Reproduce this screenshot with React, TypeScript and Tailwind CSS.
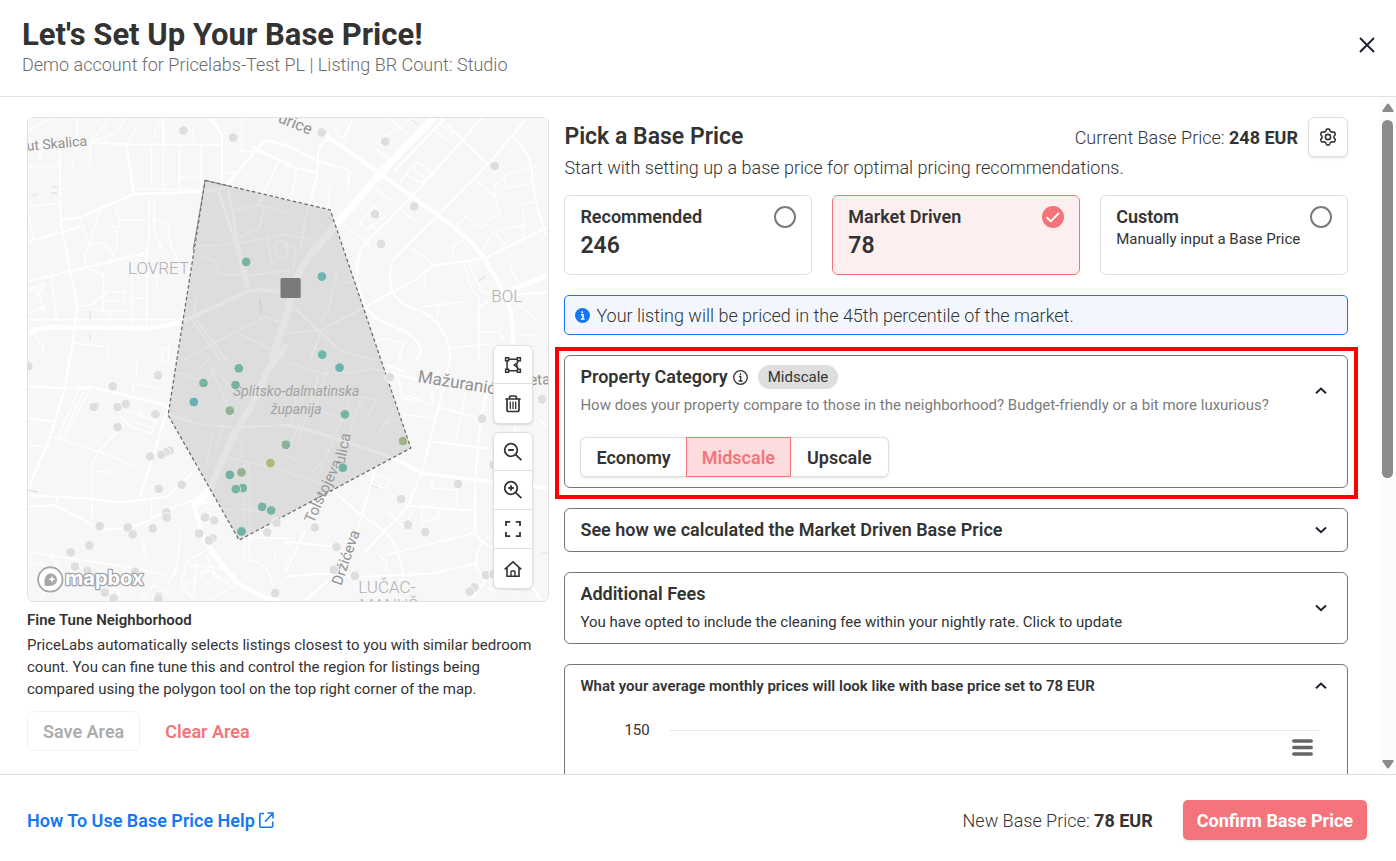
import React from "react";

type Dot = [number, number, string?];

const TEAL = "#78b3a4";
const LIGHT = "#dedede";

const tiles: { x: number; y: number; dots: Dot[]; roads: [number, string][] }[] = [
  {
    x: 20,
    y: 110,
    dots: [[490, 62], [639, 83], [678, 456, TEAL]],
    roads: [
      [6, "M210 97 L320 103 L605 105 M430 20 V105 M320 103 L340 253 M118 100 L122 340 M20 515 L385 428 M122 340 L150 480 L172 590 L150 750 M20 395 L122 368 L180 350 M478 105 V240 M542 105 V240 M605 75 V215"],
      [8, "M125 332 L180 322 L340 253 L560 245 L610 235 L735 90 L810 110 M690 110 L810 165 M570 25 L605 72"],
      [13, "M0 690 Q40 655 80 652 L380 654 Q450 652 520 620 L680 545 Q720 535 810 550"],
      [4, "M210 97 L270 25 M210 97 V170 M172 20 V90 M210 97 L290 70 L320 20 M320 103 L350 50 M395 105 V225 M430 105 V240 M480 203 H540 M340 237 L605 240 M388 260 V410 M402 260 V360 L425 415 M402 330 L445 340 L450 400 L475 455 M240 300 L195 435 V470 L250 495 M180 325 L190 360 L205 380 M210 402 L250 400 L280 430 L270 470 M300 330 H380 M300 330 L285 290 M290 355 V420 M270 350 H300 V330 M20 170 H115 M20 290 L115 280 M25 310 L40 390 M60 100 V165 M160 140 V170 M95 500 L110 635 M50 535 L75 610 M20 540 L75 520 L50 560 M20 610 L75 590 M250 490 V600 M258 545 H313 V573 H258 Z M335 450 V650 M335 565 H382 M380 400 V645 M172 590 L215 585 L260 545 M215 602 H330 M270 600 V645 M20 630 L500 628 M160 700 L265 710 V745 M40 670 L70 710 V725 M425 750 V715 H445 V750 M410 490 V530 M510 410 L620 405 L740 385 L810 370 M665 25 V125 H730 M520 45 V100 M405 85 V60 L430 30 M25 60 L90 25 M120 230 L140 245 M610 188 H650"],
      [8, "M595 245 L640 380 L680 535 M625 240 L650 380 L685 530"],
      [5, "M625 305 L715 285 L775 155 M715 285 L810 310 M730 290 L718 355 L650 385 M740 375 L755 465 M765 400 Q785 380 800 410 V430 Q785 460 765 430 Z M665 500 L810 480 M540 440 L580 450 L600 495 H660 M510 620 L600 750 M525 625 L620 750 M735 620 L600 690 L490 750 M655 670 L780 730 M735 620 L810 650 M805 600 L750 750 M530 550 L520 620"],
    ],
  },
  {
    x: 285,
    y: 110,
    dots: [[109, 68], [300, 95], [628, 169], [387, 290], [269, 313], [287, 402], [110, 500, "#6fb5af"], [111, 734, "#6fb5af"]],
    roads: [
      [12, "M120 75 L290 195 L470 325 Q560 390 600 450 L650 540 Q690 600 684 750"],
      [22, "M450 20 L290 185 L165 330 L80 430 Q30 490 15 580 L-40 750"],
      [6, "M325 185 L475 30 M590 25 L385 255 L240 400 Q190 470 240 590 L270 625 Q330 650 370 670 Q430 720 390 750 M720 30 L620 150 L320 455 Q300 540 350 580 L420 610 Q490 650 496 750 M460 20 L610 165 M685 85 Q740 130 740 200 L752 280 L780 370 L800 380 M0 105 L100 155 M0 165 L95 190 M130 90 Q95 100 98 150 L97 190 L60 330 L45 420 M100 155 L190 180 L190 230 M0 670 L110 660 L240 590 L390 510 L445 467 L600 445 L720 385 L800 345"],
      [15, "M660 550 L690 535 L810 485"],
      [6, "M690 555 L800 545 M580 750 V600 Q585 580 650 560 M25 590 L130 690 L170 725 L270 750 M110 660 L75 750"],
      [4, "M270 100 L385 20 M270 115 L310 150 M310 25 L370 75 M145 50 L170 90 L200 30 L175 110 M445 60 L485 90 L500 70 L460 40 M400 155 L440 190 L405 220 L360 190 Z M380 175 L420 205 M345 215 L370 185 M270 235 L320 275 M225 340 L265 290 L300 320 L245 358 Z M260 350 L285 370 M350 300 L390 335 M180 345 L255 410 M380 415 L445 465 M420 490 V540 M575 215 L630 260 L645 315 L615 325 L595 355 L570 345 L545 320 L510 350 M630 260 L625 230 L670 190 L755 170 M655 205 L665 235 L742 220 M710 285 L750 275 M710 285 L720 345 L625 365 L590 420 M630 370 L660 405 M715 345 V380 M530 390 L500 410 L505 450 M535 460 L560 540 L580 560 V600 M545 455 L595 550 L640 540 M675 470 L700 520 M695 580 L755 630 L745 640 M410 590 L540 575 M460 590 L455 620 M580 665 L640 665 L655 690 M500 715 L580 705 L620 700 M700 675 H750 M710 715 H760 M270 695 L300 685 L355 700 L340 750 M35 175 L20 255 M135 215 L128 290 M0 375 L90 390 M0 400 L30 420 L25 480 M155 485 L130 600 L105 640 M165 520 L205 515"],
    ],
  },
  {
    x: 20,
    y: 355,
    dots: [
      [25, 34], [414, 61], [278, 94], [317, 147], [292, 156], [225, 153], [221, 156], [406, 178], [292, 216], [390, 304], [449, 287], [437, 292], [424, 299],
      [485, 389], [416, 401], [439, 472], [440, 487], [555, 487], [582, 496], [537, 535], [577, 549], [567, 556], [239, 513], [323, 517], [338, 538],
      [398, 520], [208, 571], [152, 592], [165, 634], [202, 647], [345, 650], [254, 712], [281, 729], [415, 725], [415, 732], [769, 503], [741, 532], [765, 714],
      [656, 40, TEAL], [550, 84, TEAL], [646, 90, TEAL], [521, 141, "#66b1b0"], [629, 167, "#90b48d"], [797, 269, "#85b398"], [751, 324, "#b4b67e"],
      [629, 359, "#74b3a4"], [664, 352, "#94b491"], [668, 399, TEAL], [647, 402, TEAL], [726, 455, TEAL], [753, 466, TEAL], [664, 529, "#70b3a6"],
    ],
    roads: [
      [7, "M20 95 L160 100 Q190 90 230 100 L440 150 L450 180 L530 205 Q620 220 680 215 L810 210 M150 0 L135 100 L90 245 L20 410 M20 190 L105 200"],
      [20, "M800 -30 L740 50 L700 140 L640 240 L570 400 L530 450"],
      [13, "M570 400 L520 440 L535 500 Q545 550 570 580 L650 680 Q700 720 780 740"],
      [6, "M20 420 L215 430 L290 442 L395 430 L440 425 M20 455 L105 450 L240 520 Q300 530 380 500 Q440 460 520 435 L600 450 M440 170 L360 425 M440 425 L485 385 L540 330 M215 430 V490 M105 450 L120 420"],
      [4, "M115 240 L180 100 L210 105 L130 250 Z M135 230 L190 110 M95 245 L235 290 L350 335 M235 290 L320 200 M350 20 V70 M340 85 L430 105 M340 85 V110 M300 180 L335 220 M315 165 L410 200 M330 215 L395 235 L410 190 M345 200 L405 220 M360 160 V190 M215 350 H265 L300 365 M235 290 L215 330 V430 M395 435 V490 M365 545 L380 620 M480 530 L475 600 L465 660 M465 640 L445 690 M20 270 L90 275 M20 590 L350 640 L440 660 M20 620 L120 640 M90 600 L140 680 M500 620 L560 585 L650 690 L540 750 L480 690 Z M510 630 L620 640 M530 615 L520 720 M560 600 L600 690 M495 690 L560 640 L630 690 M545 665 A18 18 0 1 0 581 665 A18 18 0 1 0 545 665 M672 320 V615 M688 320 V615 M672 570 H690 M670 615 H700 L740 640 L760 690 V720 M765 620 V590 M640 545 L810 550 M600 300 L640 310 L810 350 M560 290 L590 270 L610 210 M575 240 L560 330 M640 240 L665 270 V310 M460 50 L560 80 L590 40 M540 40 L570 10 M570 30 L640 190 M600 60 L640 110 M660 460 L720 470 M350 750 L400 690 L450 720 M230 690 L270 680 L300 720 M60 640 L80 700 L60 740 M550 460 L640 465 M790 640 L810 600 M425 0 V20 H445"],
    ],
  },
  {
    x: 285,
    y: 355,
    dots: [
      [314, 67], [590, 191], [770, 133], [625, 329], [518, 387], [347, 432], [368, 509], [420, 531], [89, 517], [154, 576], [146, 644], [209, 662],
      [602, 660], [625, 657], [567, 697], [553, 709], [163, 38, "#6cb2ad"], [179, 178, TEAL], [353, 258, "#a2b487"], [173, 338, "#72b3a4"],
    ],
    roads: [
      [11, "M0 210 Q60 220 120 240 L240 280 Q340 310 410 355 L800 400"],
      [6, "M495 0 L480 80 L455 170 L410 355 L380 420 Q380 450 295 530 L235 595 M150 40 L190 55 L260 40 L400 75 L480 90 L610 110 M605 90 L585 200 L570 370 V535 Q590 565 625 580 M455 155 L585 190 M445 260 L610 280 M370 452 L565 467 M300 600 L570 533 M120 385 L210 465 L295 525 Q340 570 355 665 M60 530 L0 650 M0 560 L150 575 M0 665 L100 655 L240 665 L440 655 L570 625 M270 345 L215 530 L160 650 L60 735 M590 565 Q565 600 575 640 L600 680 L560 730 M690 210 V240 M740 690 L770 740 M700 620 L760 730 M760 190 L800 230 M300 30 L360 50"],
      [4, "M200 120 L100 360 M230 130 L180 270 M100 60 L60 200 M40 80 L20 210 M0 20 L130 60 M120 60 L90 160 L160 190 M200 120 L270 135 L245 190 M280 240 L335 150 M290 210 L360 180 L460 190 M365 120 L440 150 V100 M340 60 L350 130 L410 140 M280 360 L315 375 L305 400 L265 390 M440 370 V400 L515 405 V455 M460 455 V490 L410 500 V455 M300 465 L350 510 M380 470 L370 495 M60 280 L110 320 L80 350 M0 350 L120 390 M0 300 L40 320 M280 600 L305 620 L300 650 M600 130 L630 100 M540 120 L510 260 M210 690 L280 720 M600 700 L700 710 M45 200 L20 260 M60 200 L35 260 M130 30 L110 90 M625 540 L580 560"],
    ],
  },
];

function MapCanvas() {
  return (
    <svg
      viewBox="28 118 520 483"
      preserveAspectRatio="xMidYMid slice"
      className="block h-full w-full"
      role="img"
      aria-label="Neighborhood map"
    >
      <rect x="0" y="0" width="1200" height="900" fill="#f7f7f7" />
      {tiles.map((t) => (
        <g key={`r${t.x}-${t.y}`} transform={`translate(${t.x} ${t.y}) scale(.33333)`} fill="none" stroke="#fff" strokeLinejoin="round">
          {t.roads.map(([w, d]) => (
            <path key={d} d={d} strokeWidth={w} />
          ))}
        </g>
      ))}
      <g stroke="#dddddd" strokeWidth="1">
        <path d="M52 187h6M51 193h6M31 196l7-2M90 311v10M90 334v6M412 120l5 4M478 281l7-4M371 485l7 3M27 490l11 2M541 553h7M260 299l1 15M327 217l5 4" fill="none" />
      </g>
      <g fontFamily="Roboto, 'Noto Sans', sans-serif" fontSize="17" fontWeight="300" fill="#b0b0b0" stroke="#f7f7f7" strokeWidth="2" paintOrder="stroke">
        <text x="128" y="274">LOVRET</text>
        <text x="491" y="302">BOL</text>
        <text x="358" y="593">LUČAC-</text>
        <text x="359" y="611">MANUŠ</text>
      </g>
      <g fontFamily="Roboto, 'Noto Sans', sans-serif" fill="#919191" stroke="#f7f7f7" strokeWidth="2" paintOrder="stroke">
        <text transform="translate(27 151) rotate(-5)" fontSize="14">ut Skalica</text>
        <text transform="translate(277 122) rotate(22)" fontSize="16">urice</text>
        <text transform="translate(417 382) rotate(9)" fontSize="17">Mažuranić</text>
        <text transform="translate(529 385) rotate(-2)" fontSize="15">eta</text>
        <text transform="translate(341 586) rotate(-71)" fontSize="15">Držićeva</text>
      </g>
      <path d="M205 180.500 L330 210 L410.500 448 L239 540 L168 415 Z" fill="#7a7a7a" fillOpacity=".2" stroke="#666" strokeWidth="1.200" strokeDasharray="3.500 2.500" />
      <path d="M193 250 L205 180.500 L228 186" fill="none" stroke="#777" strokeWidth=".8" />
      <g fontFamily="Roboto, 'Noto Sans', sans-serif" fill="#a2a2a2">
        <g fontStyle="italic" textAnchor="middle" fontSize="14">
          <text x="296" y="396">Splitsko-dalmatinska</text>
          <text x="296" y="414">županija</text>
        </g>
        <text transform="translate(313 524) rotate(-65)" fontSize="15" fill="#999">Tolstojeva</text>
        <text transform="translate(344 465) rotate(-78)" fontSize="15" fill="#999">ulica</text>
      </g>
      {tiles.map((t) => (
        <g key={`d${t.x}-${t.y}`} transform={`translate(${t.x} ${t.y}) scale(.33333)`}>
          {t.dots.map(([x, y, c]) => (
            <circle key={`${x}-${y}`} cx={x} cy={y} r="14.500" fill={c ?? LIGHT} stroke={c ? "#e4e8e7" : "#fff"} strokeWidth="2.500" />
          ))}
        </g>
      ))}
      <rect x="280.300" y="278" width="20.200" height="20" rx="1.500" fill="#7a7a7a" />
      <g>
        <circle cx="50.300" cy="579.300" r="12.200" fill="#fff" stroke="#a8a8a8" strokeWidth="1.800" />
        <path d="M44.800 585.500c-1-5-.5-8.500 2-10.500 3-2.600 6.800-1.600 8.700.6 2.200 2.600 2 6-.4 8.300-2.600 2.200-6.300 2.200-10.300 1.600z" fill="#a8a8a8" />
        <path d="M52 575.500l1 2.700 2.700 1-2.700 1-1 2.700-1-2.700-2.700-1 2.700-1z" fill="#fff" />
        <text x="65" y="585" fontFamily="Inter, 'Open Sans', sans-serif" fontSize="20" fontWeight="700" fill="#fff" stroke="#a3a3a3" strokeWidth="2.500" strokeLinejoin="round" paintOrder="stroke">
          mapbox
        </text>
      </g>
    </svg>
  );
}

function Icon({ children, size = 20, width = 1.5 }: { children: React.ReactNode; size?: number; width?: number }) {
  return (
    <svg width={size} height={size} viewBox="0 0 20 20" fill="none" stroke="currentColor" strokeWidth={width} aria-hidden="true">
      {children}
    </svg>
  );
}

const gearPath =
  Array.from({ length: 120 }, (_, i) => {
    const a = (i / 120) * Math.PI * 2;
    const lobe = Math.max(-1, Math.min(1, 1.5 * Math.cos(6 * a)));
    const r = 7 + 0.95 * lobe;
    return `${i === 0 ? "M" : "L"}${(10 + r * Math.sin(a)).toFixed(2)} ${(10 - r * Math.cos(a)).toFixed(2)}`;
  }).join("") + "Z";

const mapTools: { label: string; icon: React.ReactNode }[][] = [
  [
    {
      label: "Draw polygon",
      icon: (
        <Icon width={1.5}>
          <path d="M2.600 2.700h3v3h-3zM14.400 2.700h3v3h-3zM2.600 14.300h3v3h-3zM14.400 14.300h3v3h-3zM5.600 4.200h8.800M5.600 15.800h8.800M4.100 5.700v8.600M15.500 5.700L14 8.300M15.500 14.300L14 11.700M11.200 10l2.600-2v4z" />
        </Icon>
      ),
    },
    {
      label: "Delete polygon",
      icon: (
        <Icon width={1.7}>
          <path d="M2.300 5h15.400M6.600 5V3.200q0-1.200 1.200-1.200h4.400q1.200 0 1.200 1.200V5M4 5v10.700q0 1.800 1.800 1.800h8.400q1.800 0 1.800-1.800V5" />
          <path d="M7.300 7.500v7.500M10 7.500v7.500M12.700 7.500v7.500" strokeWidth="1.300" />
        </Icon>
      ),
    },
  ],
  [
    {
      label: "Zoom out",
      icon: (
        <Icon width={1.8}>
          <circle cx="8" cy="8" r="6.300" />
          <path d="M12.600 12.600l5.800 5.600M5.200 8h5.600" />
        </Icon>
      ),
    },
    {
      label: "Zoom in",
      icon: (
        <Icon width={1.8}>
          <circle cx="8" cy="8" r="6.300" />
          <path d="M12.600 12.600l5.800 5.600M5.200 8h5.600M8 5.200v5.600" />
        </Icon>
      ),
    },
    {
      label: "Full screen",
      icon: (
        <Icon width={1.8}>
          <path d="M3 7V2.900h4.200M12.800 2.900H17V7M17 13v4.100h-4.200M7.200 17.100H3V13" />
        </Icon>
      ),
    },
    {
      label: "Go to home",
      icon: (
        <Icon width={1.6}>
          <path d="M1.700 10.300L10 2.800l8.300 7.500M4 8.800v8.400h12V8.800" />
          <path d="M8 17v-4.200q0-.8.8-.8h2.400q.8 0 .8.800V17" strokeWidth="1.400" />
        </Icon>
      ),
    },
  ],
];

function Chevron({ up = false, label }: { up?: boolean; label: string }) {
  return (
    <button type="button" aria-label={label} aria-expanded={up} className="flex h-6 w-6 shrink-0 items-center justify-center text-[#1a202c]">
      <svg width="12" height="12" viewBox="0 0 12 12" fill="none" stroke="currentColor" strokeWidth="1.900" aria-hidden="true">
        <path d={up ? "M1 8.300L6 3.500L11 8.300" : "M1 3.500L6 8.300L11 3.500"} />
      </svg>
    </button>
  );
}

function OptionCard({ title, selected = false, children }: { title: string; selected?: boolean; children: React.ReactNode }) {
  return (
    <label
      className={`flex h-20 justify-between rounded-md border pt-[9px] pl-[15px] ${
        selected ? "border-[#f3757b] bg-[#fdeff0]" : "border-[#e0e0e0] bg-white"
      }`}
    >
      <span className="min-w-0 whitespace-nowrap">
        <span className="block text-[18px] leading-6 font-semibold">{title}</span>
        {children}
      </span>
      <span className="relative mr-[15px] h-[22px] w-0">
        <input
          type="radio"
          name="base-price"
          defaultChecked={selected}
          className="absolute top-px right-0 block h-[22px] w-[22px] appearance-none rounded-full border-2 border-[#7b7b7b] bg-white checked:border-[#f3757b] checked:bg-[#f3757b]"
        />
        {selected && (
          <svg className="pointer-events-none absolute top-px right-0" width="22" height="22" viewBox="0 0 22 22" fill="none" stroke="#fff" strokeWidth="1.900" aria-hidden="true">
            <path d="M4.500 11.300L8.800 15.300L17 7" />
          </svg>
        )}
      </span>
    </label>
  );
}

export default function App() {
  return (
    <div className="flex h-screen flex-col bg-white font-[Roboto,sans-serif] text-[#333333]">
      <header className="flex shrink-0 items-start justify-between border-b border-[#e2e2e2] pt-[17px] pr-[17px] pb-[19px] pl-[22px]">
        <div>
          <h1 className="text-[31px] leading-9 font-bold">Let's Set Up Your Base Price!</h1>
          <p className="text-[18px] leading-6 font-light text-[#6b6b6b]">Demo account for Pricelabs-Test PL | Listing BR Count: Studio</p>
        </div>
        <button type="button" aria-label="Close" className="mt-4 flex h-6 w-6 items-center justify-center text-[#1a202c]">
          <svg width="16" height="16" viewBox="0 0 16 16" stroke="currentColor" strokeWidth="1.900" aria-hidden="true">
            <path d="M1 1l14 14M15 1L1 15" />
          </svg>
        </button>
      </header>

      <div className="flex min-h-0 flex-1">
        <main className="grid min-w-0 flex-1 grid-cols-[2fr_3fr] items-start gap-[15px] overflow-y-auto pt-5 pr-[31px] pb-6 pl-[27px] [scrollbar-width:none]">
          <section className="min-w-0">
            <div className="relative h-[485px] overflow-hidden rounded-md border border-[#e0e0e0]">
              <MapCanvas />
              <div className="absolute right-[15px] bottom-3 flex flex-col gap-2">
                {mapTools.map((group, i) => (
                  <div key={i} className="divide-y divide-[#e0e0e0] rounded-md border border-[#e0e0e0] bg-white shadow-sm">
                    {group.map((tool) => (
                      <button key={tool.label} type="button" aria-label={tool.label} className="flex h-[39px] w-[38px] items-center justify-center first:h-[38px]">
                        {tool.icon}
                      </button>
                    ))}
                  </div>
                ))}
              </div>
            </div>
            <h3 className="mt-2 text-[15px] leading-5 font-semibold">Fine Tune Neighborhood</h3>
            <p className="mt-1 text-[15px] leading-[22px]">
              PriceLabs automatically selects listings closest to you with similar bedroom count. You can fine tune this and control the region for
              listings being compared using the polygon tool on the top right corner of the map.
            </p>
            <div className="mt-[11px] flex gap-[10px]">
              <button type="button" disabled className="h-10 rounded-md border border-[#f2f2f2] px-[15px] text-[18px] font-semibold text-[#adadad]">
                Save Area
              </button>
              <button type="button" className="h-10 px-[15px] text-[18px] font-semibold text-[#f3757b]">
                Clear Area
              </button>
            </div>
          </section>

          <section className="flex min-w-0 flex-col gap-5">
            <div>
              <div className="flex h-10 items-center">
                <h2 className="text-[23px] leading-8 font-semibold">Pick a Base Price</h2>
                <p className="mr-[10px] ml-auto text-[18px] font-light">
                  Current Base Price: <strong className="font-bold">248 EUR</strong>
                </p>
                <button type="button" aria-label="Settings" className="flex h-10 w-10 items-center justify-center rounded-md border border-[#e0e0e0] shadow-sm">
                  <Icon width={1.6}>
                    <circle cx="10" cy="10" r="2.600" />
                    <path strokeLinejoin="round" d={gearPath} />
                  </Icon>
                </button>
              </div>
              <p className="text-[18px] leading-[22px] font-light">Start with setting up a base price for optimal pricing recommendations.</p>
              <fieldset className="mt-4 grid grid-cols-3 gap-5">
                <OptionCard title="Recommended">
                  <span className="block text-[23px] leading-[34px] font-semibold">246</span>
                </OptionCard>
                <OptionCard title="Market Driven" selected>
                  <span className="block text-[23px] leading-[34px] font-semibold">78</span>
                </OptionCard>
                <OptionCard title="Custom">
                  <span className="block text-[15px] leading-5">Manually input a Base Price</span>
                </OptionCard>
              </fieldset>
            </div>

            <div className="flex h-10 items-center gap-[6px] rounded-[5px] border border-[#1a75ee] bg-[#f2f7fe] px-[10px]">
              <svg width="15" height="15" viewBox="0 0 15 15" aria-hidden="true">
                <circle cx="7.500" cy="7.500" r="7.500" fill="#1677f5" />
                <path d="M6 6.800h2v4M5.800 11h3.800M7.200 3.200v2" fill="none" stroke="#fff" strokeWidth="1.500" />
              </svg>
              <p className="text-[18px] font-light">Your listing will be priced in the 45th percentile of the market.</p>
            </div>

            <div className="relative rounded-md border border-[#767676] pt-[9px] pr-[14px] pb-[10px] pl-[15px]">
              <div className="pointer-events-none absolute -top-[9px] -right-[11px] -bottom-[12px] -left-[10px] border-4 border-[#ff0000]" />
              <div className="flex items-center justify-between">
                <div>
                  <div className="flex items-center">
                    <h3 className="text-[18px] leading-6 font-semibold">Property Category</h3>
                    <svg className="ml-[5px]" width="15" height="15" viewBox="0 0 15 15" fill="none" stroke="currentColor" aria-hidden="true">
                      <circle cx="7.500" cy="7.500" r="6.800" strokeWidth="1.300" />
                      <path d="M6 6.500h1.700v4.300M5.600 11h4M7.400 3.300v1.700" strokeWidth="1.300" />
                    </svg>
                    <span className="ml-[10px] rounded-full bg-[#dedede] px-[10px] text-[15px] leading-6">Midscale</span>
                  </div>
                  <p className="mt-1 text-[15px] leading-6 text-[#7b7b7b]">
                    How does your property compare to those in the neighborhood? Budget-friendly or a bit more luxurious?
                  </p>
                </div>
                <Chevron up label="Collapse property category" />
              </div>
              <div className="mt-5 inline-flex rounded-md text-[18px] font-semibold shadow-sm">
                <button type="button" className="h-10 rounded-l-md border border-r-0 border-[#e0e0e0] px-[15px]">
                  Economy
                </button>
                <button type="button" aria-pressed="true" className="h-10 border border-[#f3757b] bg-[#fddcde] px-[15px] text-[#f3757b]">
                  Midscale
                </button>
                <button type="button" className="h-10 rounded-r-md border border-l-0 border-[#e0e0e0] px-4">
                  Upscale
                </button>
              </div>
            </div>

            <div className="flex items-center justify-between rounded-md border border-[#767676] py-[9px] pr-[14px] pl-[15px]">
              <h3 className="text-[18px] leading-6 font-semibold">See how we calculated the Market Driven Base Price</h3>
              <Chevron label="Expand calculation" />
            </div>

            <div className="flex items-center justify-between rounded-md border border-[#767676] py-[9px] pr-[14px] pl-[15px]">
              <div>
                <h3 className="text-[18px] leading-6 font-semibold">Additional Fees</h3>
                <p className="mt-1 text-[15px] leading-6">You have opted to include the cleaning fee within your nightly rate. Click to update</p>
              </div>
              <Chevron label="Expand additional fees" />
            </div>

            <div className="h-[480px] rounded-md border border-[#767676] py-[9px] pr-[14px] pl-[15px]">
              <div className="flex items-center justify-between">
                <h3 className="text-[15px] leading-6 font-semibold">What your average monthly prices will look like with base price set to 78 EUR</h3>
                <Chevron up label="Collapse monthly prices" />
              </div>
              <div className="mt-5 mr-[14px] ml-11 flex items-center gap-5">
                <span className="text-[15px] leading-6">150</span>
                <span className="h-px flex-1 bg-[#e6e6e6]" />
              </div>
              <div className="mr-5 flex justify-end">
                <button type="button" aria-label="Chart menu" className="-mt-[3px] text-[#666666]">
                  <svg width="21" height="17" viewBox="0 0 21 17" stroke="currentColor" strokeWidth="3.500" strokeLinecap="round" aria-hidden="true">
                    <path d="M1.800 2h17.400M1.800 8.500h17.400M1.800 15h17.400" />
                  </svg>
                </button>
              </div>
            </div>
          </section>
        </main>

        <div className="flex w-[17px] shrink-0 flex-col items-center bg-[#fcfcfc] pt-[6px] pb-[5px]" aria-hidden="true">
          <svg width="12" height="9" viewBox="0 0 12 9" fill="#8b8b8b">
            <path d="M6 0.500Q6.700.5 7.100 1.200L11.500 7.500Q12 9 10.800 9H1.200Q0 9 .5 7.500L4.900 1.200Q5.300.5 6 .5z" />
          </svg>
          <div className="mt-2 flex w-[11px] flex-1 flex-col">
            <div className="h-[56%] rounded-full bg-[#8b8b8b]" />
          </div>
          <svg width="12" height="9" viewBox="0 0 12 9" fill="#8b8b8b">
            <path d="M6 8.500Q6.700 8.500 7.100 7.800L11.500 1.500Q12 0 10.800 0H1.200Q0 0 .5 1.500L4.900 7.800Q5.300 8.500 6 8.500z" />
          </svg>
        </div>
      </div>

      <footer className="flex shrink-0 items-center border-t border-[#dedede] pt-[25px] pr-[29px] pb-[21px] pl-[27px]">
        <a href="#help" className="flex items-center gap-1 text-[18px] font-semibold text-[#1677f5]">
          How To Use Base Price Help
          <svg width="15" height="16" viewBox="0 0 15 16" fill="none" stroke="currentColor" strokeWidth="1.600" aria-hidden="true">
            <path d="M5 1.500H2q-1.200 0-1.200 1.200V14q0 1.200 1.200 1.200h10.500q1.200 0 1.200-1.200V9.500M8.500 1H14v5.500M13.800 1.200L6 9.800" />
          </svg>
        </a>
        <p className="ml-auto text-[18px] font-light">
          New Base Price: <strong className="font-bold">78 EUR</strong>
        </p>
        <button type="button" className="ml-[30px] h-10 rounded-[5px] bg-[#f3757b] px-[14px] text-[18px] font-bold text-white shadow-sm">
          Confirm Base Price
        </button>
      </footer>
    </div>
  );
}
